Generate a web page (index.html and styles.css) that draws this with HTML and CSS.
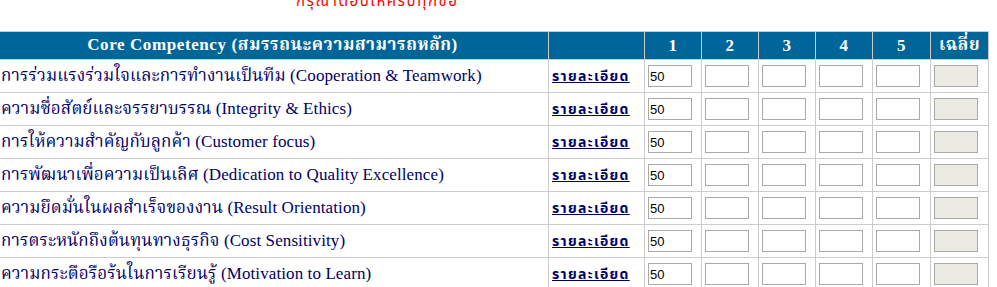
FILE: index.html
```html
<!DOCTYPE html>
<html lang="th">
<head>
<meta charset="utf-8">
<link rel="stylesheet" href="styles.css">
</head>
<body>
<div class="notice">กรุณาตอบให้ครบทุกข้อ</div>
<table class="grid">
  <colgroup>
    <col class="c-name"><col class="c-link"><col class="c-s"><col class="c-s"><col class="c-s"><col class="c-s"><col class="c-s5"><col class="c-avg">
  </colgroup>
  <thead>
    <tr>
      <th>Core Competency (สมรรถนะความสามารถหลัก)</th>
      <th></th>
      <th>1</th><th>2</th><th>3</th><th>4</th><th>5</th><th>เฉลี่ย</th>
    </tr>
  </thead>
  <tbody>
    <tr>
      <td class="name">การร่วมแรงร่วมใจและการทำงานเป็นทีม (Cooperation &amp; Teamwork)</td>
      <td class="lk"><a href="#">รายละเอียด</a></td>
      <td><input class="sc" value="50"></td><td><input class="sc"></td><td><input class="sc"></td><td><input class="sc"></td><td><input class="sc"></td><td><input class="sc" disabled></td>
    </tr>
    <tr>
      <td class="name">ความซื่อสัตย์และจรรยาบรรณ (Integrity &amp; Ethics)</td>
      <td class="lk"><a href="#">รายละเอียด</a></td>
      <td><input class="sc" value="50"></td><td><input class="sc"></td><td><input class="sc"></td><td><input class="sc"></td><td><input class="sc"></td><td><input class="sc" disabled></td>
    </tr>
    <tr>
      <td class="name">การให้ความสำคัญกับลูกค้า (Customer focus)</td>
      <td class="lk"><a href="#">รายละเอียด</a></td>
      <td><input class="sc" value="50"></td><td><input class="sc"></td><td><input class="sc"></td><td><input class="sc"></td><td><input class="sc"></td><td><input class="sc" disabled></td>
    </tr>
    <tr>
      <td class="name">การพัฒนาเพื่อความเป็นเลิศ (Dedication to Quality Excellence)</td>
      <td class="lk"><a href="#">รายละเอียด</a></td>
      <td><input class="sc" value="50"></td><td><input class="sc"></td><td><input class="sc"></td><td><input class="sc"></td><td><input class="sc"></td><td><input class="sc" disabled></td>
    </tr>
    <tr>
      <td class="name">ความยึดมั่นในผลสำเร็จของงาน (Result Orientation)</td>
      <td class="lk"><a href="#">รายละเอียด</a></td>
      <td><input class="sc" value="50"></td><td><input class="sc"></td><td><input class="sc"></td><td><input class="sc"></td><td><input class="sc"></td><td><input class="sc" disabled></td>
    </tr>
    <tr>
      <td class="name">การตระหนักถึงต้นทุนทางธุรกิจ (Cost Sensitivity)</td>
      <td class="lk"><a href="#">รายละเอียด</a></td>
      <td><input class="sc" value="50"></td><td><input class="sc"></td><td><input class="sc"></td><td><input class="sc"></td><td><input class="sc"></td><td><input class="sc" disabled></td>
    </tr>
    <tr>
      <td class="name">ความกระตือรือร้นในการเรียนรู้ (Motivation to Learn)</td>
      <td class="lk"><a href="#">รายละเอียด</a></td>
      <td><input class="sc" value="50"></td><td><input class="sc"></td><td><input class="sc"></td><td><input class="sc"></td><td><input class="sc"></td><td><input class="sc" disabled></td>
    </tr>
  </tbody>
</table>
</body>
</html>
```
FILE: styles.css
```css
html, body {
  margin: 0;
  padding: 0;
  background: #ffffff;
  overflow: hidden;
}
body {
  font-family: "Liberation Serif", "Noto Serif Thai", "Noto Sans Thai", serif;
  color: #000066;
}
.notice {
  margin-top: -9px;
  height: 40px;
  padding-left: 296px;
  font-family: "DejaVu Sans", "Noto Sans Thai", sans-serif;
  font-size: 15px;
  line-height: 20px;
  letter-spacing: 1.6px;
  color: #ff0000;
}
.grid {
  border-collapse: collapse;
  table-layout: fixed;
  margin-left: -4px;
  width: 993px;
}
.c-name { width: 552px; }
.c-link { width: 96px; }
.c-s { width: 57px; }
.c-s5 { width: 58px; }
.c-avg { width: 58px; }
.grid th, .grid td {
  border: 1px solid #cccccc;
  padding: 0 3px;
}
.grid th {
  background: #006699;
  color: #ffffff;
  font-weight: bold;
  font-size: 17px;
  letter-spacing: 0.6px;
  height: 26px;
  text-align: center;
}
.grid td {
  height: 32px;
  font-size: 17px;
  white-space: nowrap;
}
.grid td.name {
  padding-left: 4px;
  letter-spacing: 0.1px;
}
.lk a {
  font-family: "DejaVu Sans", "Noto Sans Thai", sans-serif;
  font-size: 14px;
  font-weight: bold;
  letter-spacing: 1.3px;
  color: #000066;
}
.sc {
  box-sizing: border-box;
  width: 44px;
  height: 22px;
  margin: 0;
  padding: 0 1px;
  border: 1px solid #a9a9a9;
  font-family: "Liberation Sans", sans-serif;
  font-size: 13px;
  letter-spacing: 0;
  color: #000000;
  background: #ffffff;
  display: block;
}
.sc:disabled {
  background: #ebebe4;
}
```
